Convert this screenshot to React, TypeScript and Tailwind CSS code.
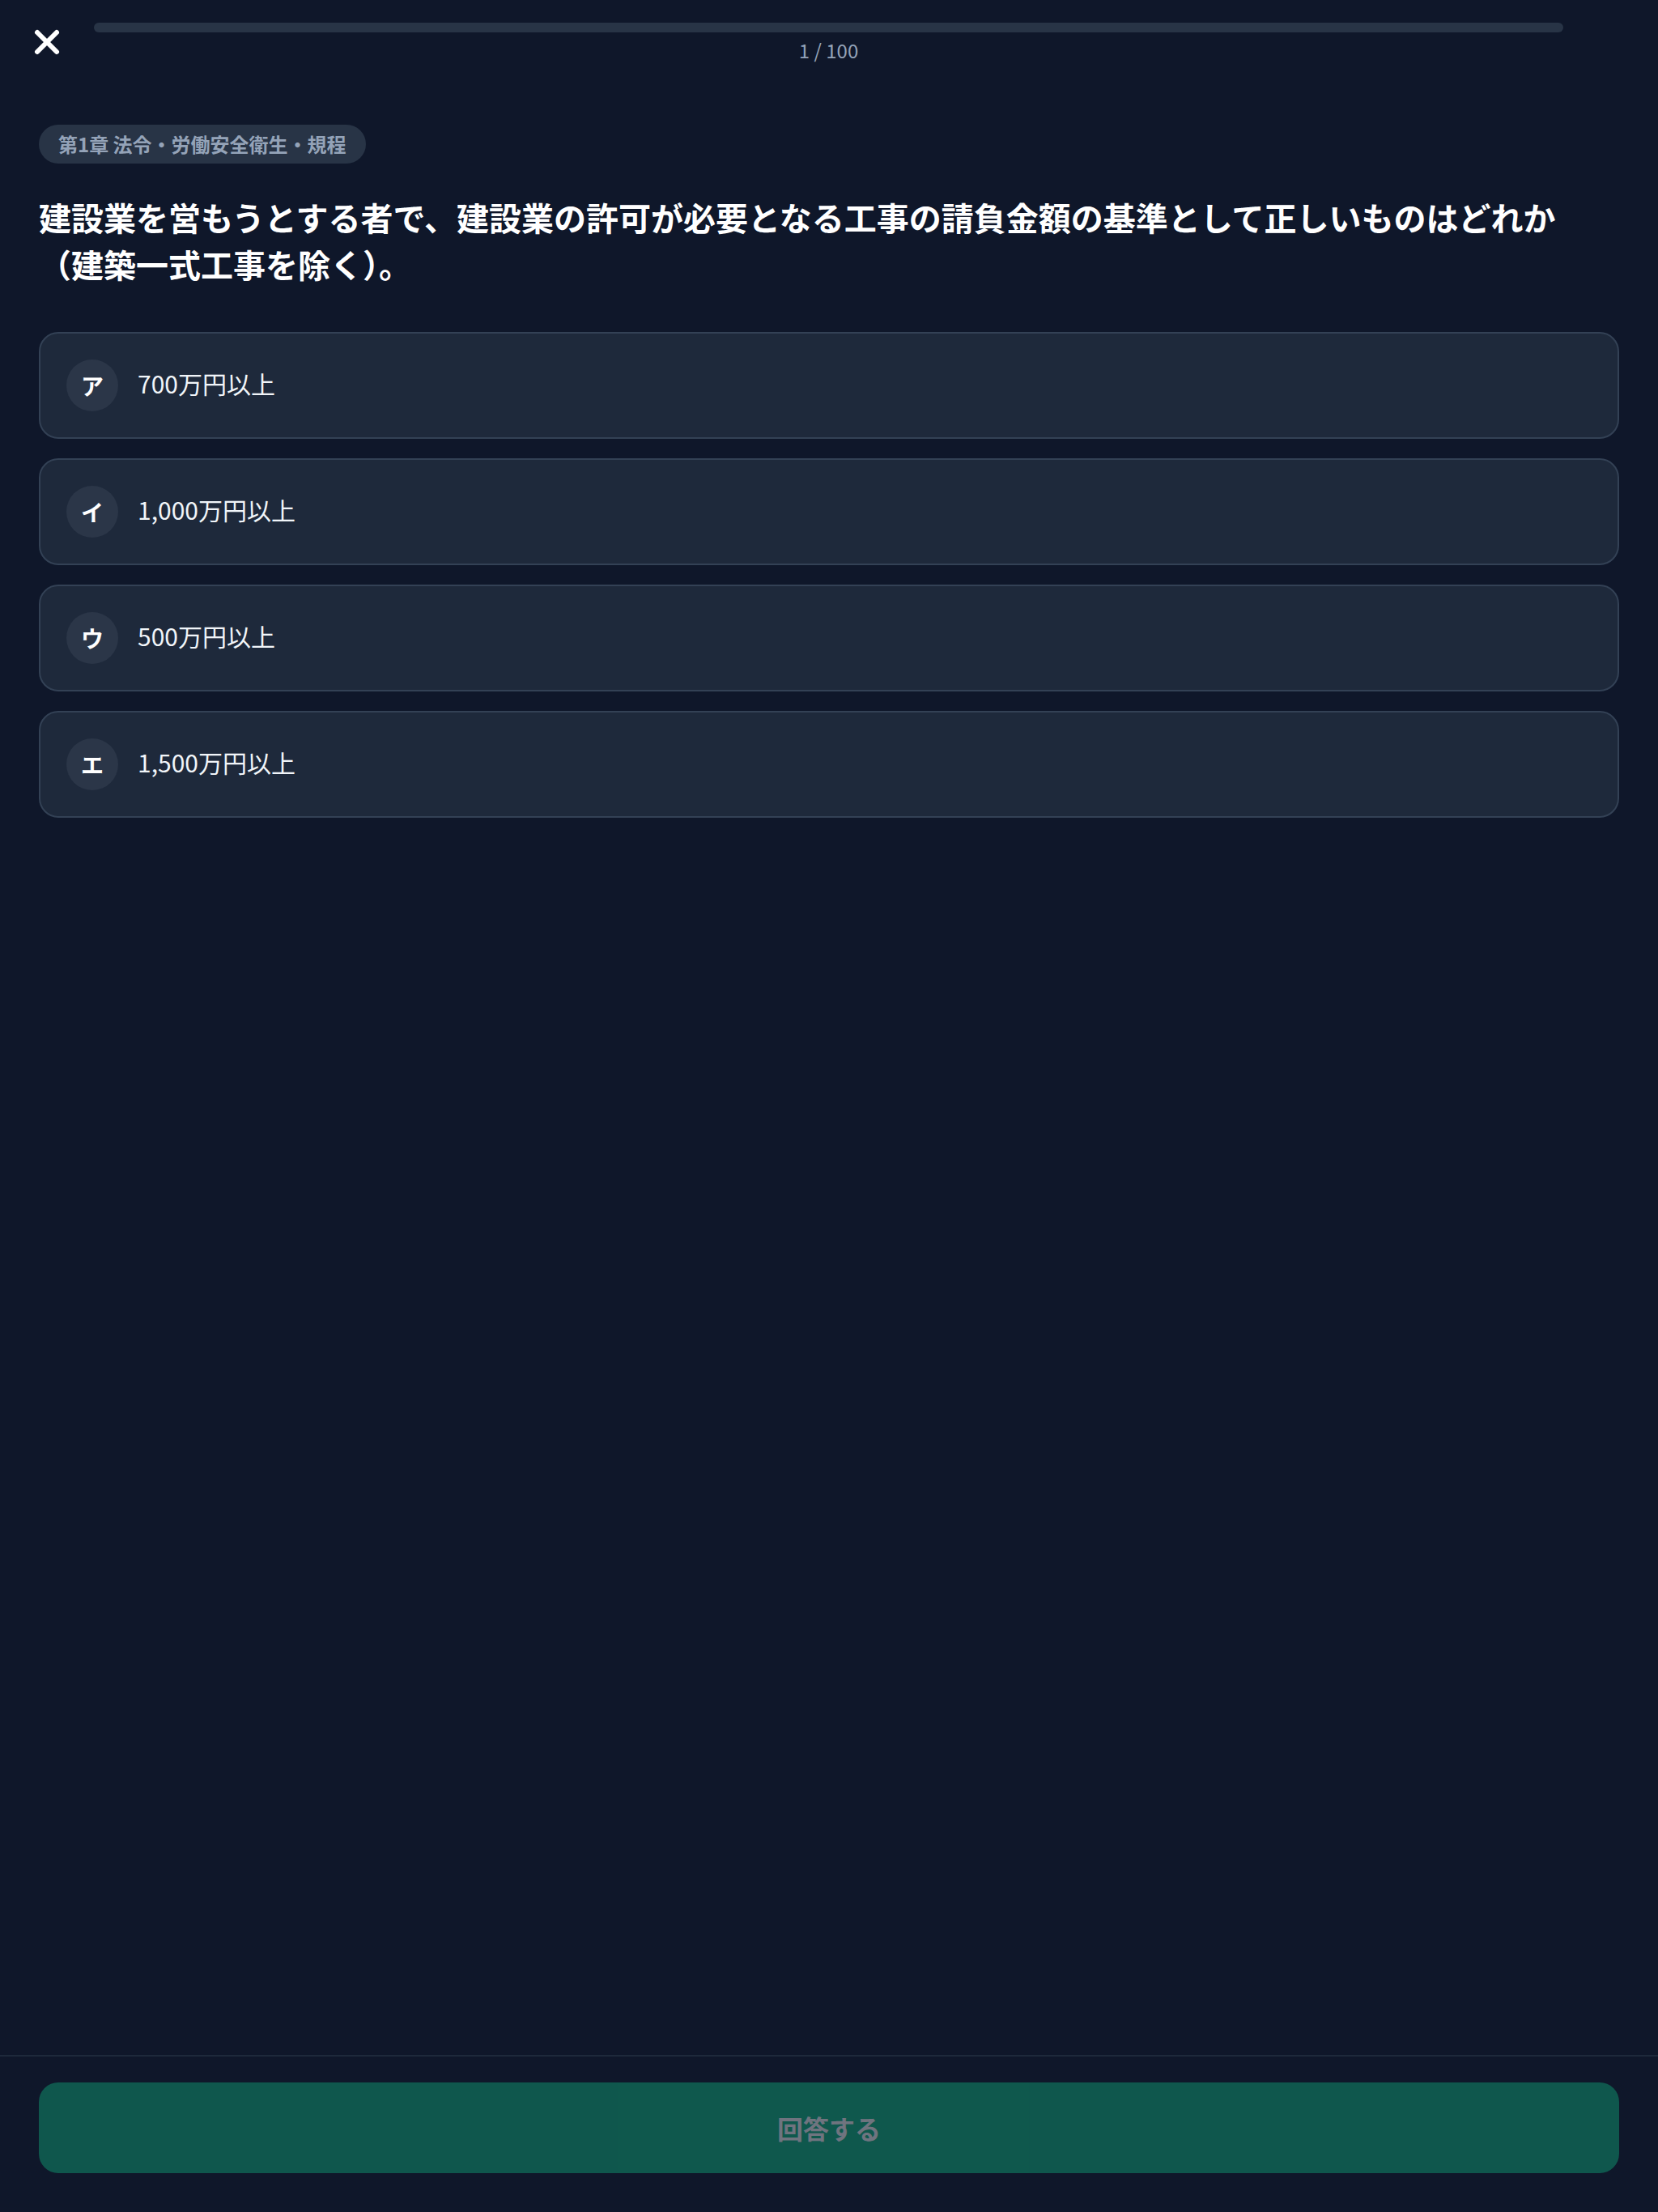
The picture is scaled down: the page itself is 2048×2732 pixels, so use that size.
import React, { useState } from 'react';
import { X } from 'lucide-react';

const choices = [
  { key: 'ア', label: '700万円以上' },
  { key: 'イ', label: '1,000万円以上' },
  { key: 'ウ', label: '500万円以上' },
  { key: 'エ', label: '1,500万円以上' },
];

export default function App() {
  const [selected, setSelected] = useState<string | null>(null);
  const current = 1;
  const total = 100;

  return (
    <div className="min-h-screen flex flex-col bg-[#0f172a] text-white font-['Noto_Sans_CJK_JP','Noto_Sans',sans-serif]">
      {/* Header */}
      <header className="flex items-start pt-[28px] pl-[34px] pr-[117px]">
        <button className="w-12 h-12 flex items-center justify-center text-white">
          <X size={48} strokeWidth={3} />
        </button>
        <div className="flex-1 ml-[34px] flex flex-col items-center">
          <div className="w-full h-3 rounded-full bg-[#283446] overflow-hidden">
            <div className="h-full rounded-full bg-[#10b981]" style={{ width: `${((selected ? current : current - 1) / total) * 100}%` }} />
          </div>
          <span className="mt-1.5 text-2xl leading-8 text-[#94a3b8]">
            {current} / {total}
          </span>
        </div>
      </header>

      {/* Question */}
      <main className="flex-1 px-12 pt-[76px]">
        <span className="inline-block rounded-full bg-[#283446] px-6 py-2 text-2xl leading-8 font-bold text-[#94a3b8]">
          第1章 法令・労働安全衛生・規程
        </span>

        <h2 className="mt-[37px] text-[40px] leading-[58px] font-bold text-white">
          建設業を営もうとする者で、建設業の許可が必要となる工事の請負金額の基準として正しいものはどれか（建築一式工事を除く）。
        </h2>

        <div className="mt-[55px] flex flex-col gap-6">
          {choices.map((c) => (
            <button
              key={c.key}
              onClick={() => setSelected(c.key)}
              className={`w-full flex items-center gap-6 p-8 rounded-3xl border-2 text-left transition-colors ${
                selected === c.key ? 'bg-[#10b981]/10 border-[#10b981]' : 'bg-[#1e293b] border-[#334155]'
              }`}
            >
              <span className="w-16 h-16 shrink-0 rounded-full bg-[#2b3648] flex items-center justify-center text-[28px] font-bold text-white">
                {c.key}
              </span>
              <span className="mb-[6px] text-[30px] leading-10 text-[#f1f5f9]">{c.label}</span>
            </button>
          ))}
        </div>
      </main>

      {/* Footer */}
      <footer className="border-t-2 border-[#1e293b] px-12 pt-8 pb-12">
        <button
          disabled={!selected}
          className="w-full h-[112px] rounded-3xl bg-[#10b981] text-white text-[32px] font-bold disabled:opacity-40"
        >
          回答する
        </button>
      </footer>
    </div>
  );
}
